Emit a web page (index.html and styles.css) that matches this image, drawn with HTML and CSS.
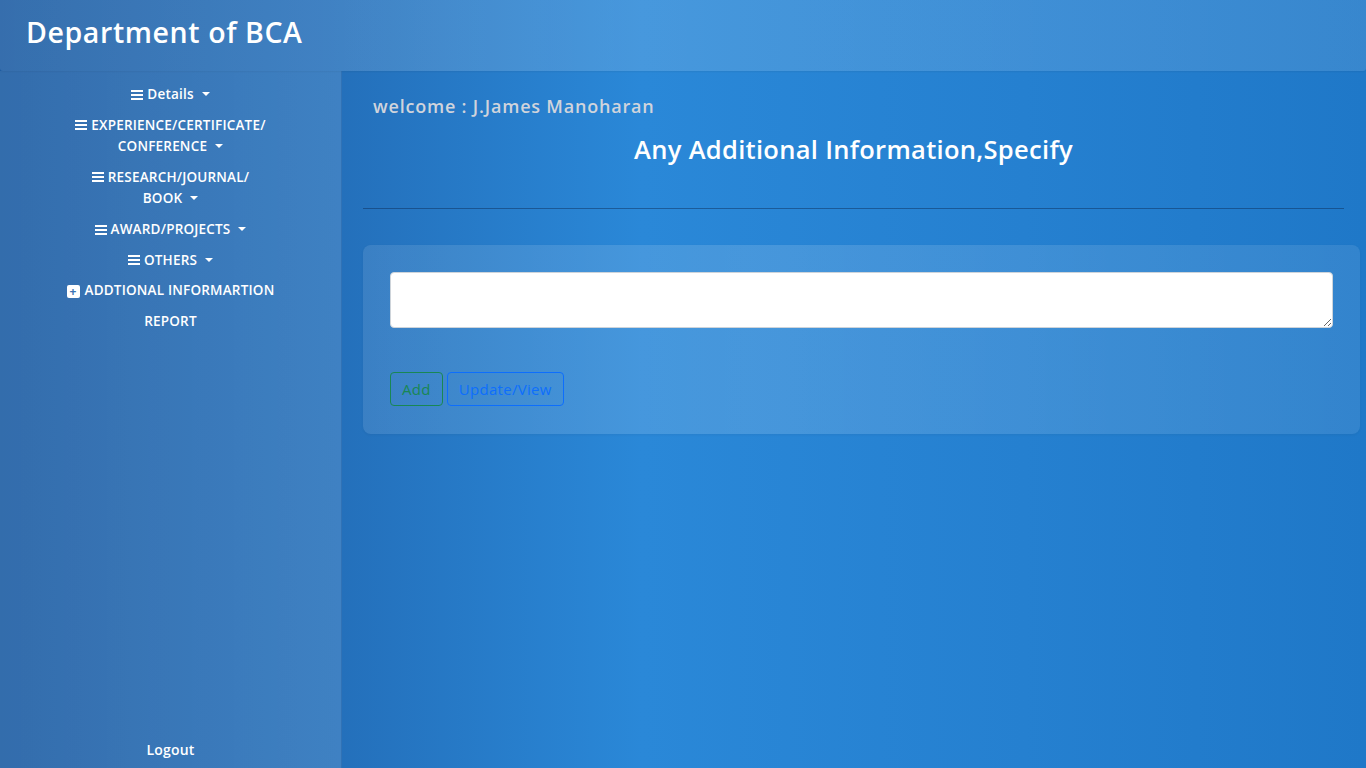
FILE: index.html
```html
<!DOCTYPE html>
<html lang="en">
<head>
<meta charset="utf-8">
<title>Department of BCA</title>
<link rel="stylesheet" href="styles.css">
</head>
<body>
<div class="page">
  <header class="topbar">
    <h1 class="brand">Department of BCA</h1>
  </header>
  <div class="body">
    <aside class="sidebar">
      <nav class="menu">
        <a class="item"><span class="bars"></span>Details<span class="caret"></span></a>
        <a class="item"><span class="bars"></span>EXPERIENCE/CERTIFICATE/<br>CONFERENCE<span class="caret"></span></a>
        <a class="item"><span class="bars"></span>RESEARCH/JOURNAL/<br>BOOK<span class="caret"></span></a>
        <a class="item"><span class="bars"></span>AWARD/PROJECTS<span class="caret"></span></a>
        <a class="item"><span class="bars"></span>OTHERS<span class="caret"></span></a>
        <a class="item"><span class="plus">+</span>ADDTIONAL INFORMARTION</a>
        <a class="item">REPORT</a>
      </nav>
      <a class="logout">Logout</a>
    </aside>
    <main class="main">
      <p class="welcome">welcome : J.James Manoharan</p>
      <h2 class="title">Any Additional Information,Specify</h2>
      <hr class="rule">
      <section class="card">
        <textarea class="field"></textarea>
        <div class="actions">
          <button class="btn btn-green">Add</button>
          <button class="btn btn-blue">Update/View</button>
        </div>
      </section>
    </main>
  </div>
</div>
</body>
</html>
```
FILE: styles.css
```css
* { box-sizing: border-box; }
html, body { margin: 0; height: 100%; }
body {
  font-family: "Open Sans", "DejaVu Sans", sans-serif;
  color: #fff;
  background: linear-gradient(to right, #1f5ea4 0%, #2470bb 25%, #2a88d8 47%, #2580d0 75%, #1f78c8 100%);
  overflow: hidden;
}
.page { height: 100vh; display: flex; flex-direction: column; }
.topbar {
  height: 71px;
  flex: none;
  background: linear-gradient(to right, rgba(255,255,255,0.10), rgba(255,255,255,0.14) 35%, rgba(255,255,255,0.11) 100%);
  border-radius: 0 0 3px 3px;
  box-shadow: 0 1px 2px rgba(0,0,0,0.06);
  display: flex;
  align-items: center;
  padding-left: 26px;
}
.brand {
  margin: 0 0 7px;
  font-size: 28.5px;
  font-weight: 600;
  letter-spacing: 0.6px;
}
.body { flex: 1; display: flex; min-height: 0; }
.sidebar {
  width: 342px;
  flex: none;
  background: linear-gradient(to right, rgba(255,255,255,0.09), rgba(255,255,255,0.12));
  border-right: 1px solid rgba(0,40,100,0.12);
  display: flex;
  flex-direction: column;
  align-items: center;
  padding: 13px 0 9px;
}
.menu { display: flex; flex-direction: column; align-items: center; gap: 9.2px; }
.item {
  font-size: 13.5px;
  font-weight: 600;
  line-height: 21.5px;
  text-align: center;
  color: #fff;
  letter-spacing: 0.2px;
}
.bars {
  display: inline-block;
  width: 12px;
  height: 10px;
  margin-right: 4px;
  vertical-align: -0.5px;
  background: linear-gradient(#fff 0 2px, transparent 2px 4px, #fff 4px 6px, transparent 6px 8px, #fff 8px 10px);
}
.caret {
  display: inline-block;
  margin-left: 8px;
  vertical-align: 3px;
  border-top: 4px solid #fff;
  border-left: 4px solid transparent;
  border-right: 4px solid transparent;
}
.plus {
  display: inline-block;
  width: 13px;
  height: 13px;
  margin-right: 5px;
  background: #fff;
  color: #3a74b4;
  border-radius: 2px;
  font-size: 12px;
  line-height: 13px;
  font-weight: 700;
  text-align: center;
  vertical-align: -1px;
}
.logout { margin-top: auto; font-size: 14px; font-weight: 600; color: #fff; letter-spacing: 0.2px; }
.main { flex: 1; padding: 24px 6px 0 21px; }
.welcome {
  margin: 0 0 0 10px;
  font-size: 18px;
  font-weight: 600;
  color: #d0d4dc;
  line-height: 22px;
  letter-spacing: 0.8px;
}
.title {
  margin: 16px 16px 0 0;
  text-align: center;
  font-size: 25.5px;
  font-weight: 600;
  line-height: 32px;
  letter-spacing: 0.3px;
}
.rule {
  margin: 43px 16px 36px 0;
  border: 0;
  border-top: 1px solid rgba(10,40,80,0.45);
}
.card {
  background: linear-gradient(to right, rgba(255,255,255,0.10), rgba(255,255,255,0.14) 40%, rgba(255,255,255,0.09));
  border-radius: 8px;
  padding: 27px 27px 28px;
  box-shadow: 0 1px 3px rgba(0,0,0,0.05);
}
.field {
  display: block;
  width: 100%;
  height: 56px;
  border: 1px solid #ced4da;
  border-radius: 4px;
  background: #fff;
  resize: vertical;
}
.actions { margin-top: 44px; display: flex; gap: 4px; }
.btn {
  font-family: inherit;
  font-size: 15px;
  height: 34px;
  padding: 0 11px;
  background: transparent;
  border-radius: 4px;
  letter-spacing: 0.3px;
}
.btn-green { border: 1px solid #198754; color: #198754; }
.btn-blue { border: 1px solid #0d6efd; color: #0d6efd; }
```
